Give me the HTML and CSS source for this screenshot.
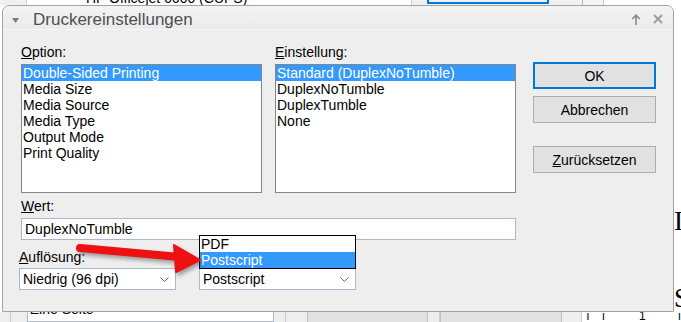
FILE: index.html
```html
<!DOCTYPE html>
<html lang="de">
<head>
    <meta charset="UTF-8">
    <title>Druckereinstellungen</title>
    <link rel="stylesheet" href="styles.css">
</head>
<body>
    <div class="backdrop">
        <div class="bg-top">
            <span class="bg-side"></span>
            <span class="bg-doc">HP Officejet 6600 (CUPS)</span>
            <span class="bg-panel"><span class="bg-focus"></span></span>
            <span class="bg-scroll"></span>
            <span class="bg-page"></span>
        </div>
        <div class="bg-mid">
            <div class="bg-serif"><span>I</span><span>S</span></div>
        </div>
        <div class="bg-bottom">
            <span class="bg-cell w10"></span>
            <span class="bg-cell w17"></span>
            <span class="bg-input">Eine Seite</span>
            <span class="bg-cell w12"></span>
            <span class="bg-cell w21"></span>
            <span class="bg-tab w122"></span>
            <span class="bg-cell w12"></span>
            <span class="bg-tab w124"></span>
            <span class="bg-cell w20"></span>
            <span class="bg-ruler"><i>ı</i><i>ı</i><b>1</b><i>ı</i></span>
        </div>
    </div>

    <div class="dialog">
        <div class="titlebar">
            <svg class="tri" width="7" height="5" viewBox="0 0 7 5"><polygon points="0,0 7,0 3.5,5" fill="#7a7a7a"/></svg>
            <span class="title">Druckereinstellungen</span>
            <span class="controls">
                <svg width="10" height="11" viewBox="0 0 10 11"><path d="M5 11V1.5M1.2 5L5 1.2 8.8 5" stroke="#8a8a8a" stroke-width="1.6" fill="none"/></svg>
                <svg width="10" height="10" viewBox="0 0 10 10"><path d="M1 1L9 9M9 1L1 9" stroke="#9a9a9a" stroke-width="1.8"/></svg>
            </span>
        </div>

        <div class="content">
            <div class="fields">
                <div class="lists">
                    <div class="field">
                        <label><u>O</u>ption:</label>
                        <ul class="listbox">
                            <li class="sel">Double-Sided Printing</li>
                            <li>Media Size</li>
                            <li>Media Source</li>
                            <li>Media Type</li>
                            <li>Output Mode</li>
                            <li>Print Quality</li>
                        </ul>
                    </div>
                    <div class="field">
                        <label><u>E</u>instellung:</label>
                        <ul class="listbox">
                            <li class="sel">Standard (DuplexNoTumble)</li>
                            <li>DuplexNoTumble</li>
                            <li>DuplexTumble</li>
                            <li>None</li>
                        </ul>
                    </div>
                </div>

                <label class="wert-label"><u>W</u>ert:</label>
                <div class="textbox">DuplexNoTumble</div>

                <div class="selects">
                    <div class="field">
                        <label class="small-gap"><u>A</u>uflösung:</label>
                        <div class="combo">
                            <span>Niedrig (96 dpi)</span>
                            <svg class="chev" width="9" height="5" viewBox="0 0 9 5"><path d="M0.5 0.5L4.5 4.5 8.5 0.5" stroke="#666" fill="none"/></svg>
                        </div>
                    </div>
                    <div class="field">
                        <label class="small-gap">&nbsp;</label>
                        <div class="combo">
                            <span>Postscript</span>
                            <svg class="chev" width="9" height="5" viewBox="0 0 9 5"><path d="M0.5 0.5L4.5 4.5 8.5 0.5" stroke="#666" fill="none"/></svg>
                            <ul class="popup">
                                <li>PDF</li>
                                <li class="sel">Postscript</li>
                            </ul>
                        </div>
                    </div>
                </div>
            </div>

            <div class="buttons">
                <button class="btn default">OK</button>
                <button class="btn">Abbrechen</button>
                <button class="btn reset"><u>Z</u>urücksetzen</button>
            </div>
        </div>
    </div>

    <svg class="annotation" width="681" height="322" viewBox="0 0 681 322">
        <line x1="80" y1="248" x2="180" y2="257" stroke="#ee1111" stroke-width="8" stroke-linecap="round"/>
        <polygon points="200,260 174,245 176,272" fill="#ee1111" stroke="#ee1111" stroke-width="2" stroke-linejoin="round"/>
    </svg>
</body>
</html>
```

FILE: styles.css
```css
html, body {
    margin: 0;
    padding: 0;
}

body {
    width: 681px;
    height: 322px;
    overflow: hidden;
    position: relative;
    background: #fff;
    font-family: "Liberation Sans", Arial, sans-serif;
    font-size: 14px;
    color: #000;
}

/* --- window behind the dialog --- */
.backdrop {
    display: grid;
    grid-template-rows: 5px 1fr 10px;
    height: 322px;
}

.bg-top {
    display: flex;
    overflow: hidden;
}

.bg-side {
    width: 26px;
    background: #f0f0f0;
    border-right: 1px solid #c5cfdc;
}

.bg-doc {
    width: 325px;
    padding-left: 59px;
    margin-top: -10px;
    line-height: 16px;
    white-space: nowrap;
    border-right: 1px solid #c5cfdc;
}

.bg-panel {
    width: 155px;
    background: #f0f0f0;
    padding-left: 15px;
    border-right: 1px solid #b8b8b8;
}

.bg-focus {
    display: block;
    width: 118px;
    height: 2px;
    border: 2px solid #0078d7;
    border-top: none;
}

.bg-scroll {
    width: 20px;
    background: #f3f3f3;
    border-right: 1px solid #c8c8c8;
}

.bg-page {
    flex: 1;
}

.bg-mid {
    display: flex;
    justify-content: flex-end;
}

.bg-serif {
    width: 7px;
    padding-top: 203px;
    display: flex;
    flex-direction: column;
    gap: 50px;
    font-family: "Liberation Serif", "Times New Roman", serif;
    font-size: 27px;
    line-height: 27px;
    overflow: hidden;
}

.bg-bottom {
    display: flex;
    background: #eee;
    overflow: hidden;
}

.bg-cell {
    border-right: 1px solid #cdcdcd;
}

.bg-cell.w17 { width: 16px; border-right: none; }
.w10 { width: 10px; }
.w12 { width: 11px; }
.w20 { width: 19px; }
.w21 { width: 21px; border-right: none; }

.bg-input {
    width: 246px;
    background: #fff;
    border: 1px solid #abb8cf;
    border-top: none;
    padding-left: 2px;
    margin-top: -10px;
    line-height: 14px;
    white-space: nowrap;
    overflow: hidden;
}

.bg-tab {
    background: #e1e1e1;
    border-left: 1px solid #c0c0c0;
    border-right: 1px solid #c0c0c0;
}

.w122 { width: 120px; }
.w124 { width: 122px; }

.bg-ruler {
    flex: 1;
    background: #fff;
    display: flex;
    gap: 12px;
    padding-left: 4px;
    font-size: 12px;
    line-height: 12px;
    margin-top: -2px;
}

.bg-ruler i { font-style: normal; }
.bg-ruler b { font-weight: normal; margin-left: 22px; margin-right: 20px; }

/* --- dialog --- */
.dialog {
    position: absolute;
    left: 2px;
    top: 5px;
    width: 672px;
    height: 307px;
    box-sizing: border-box;
    border: 1px solid #a3a3a3;
    border-radius: 7px 7px 0 0;
    background: #eeeeee;
}

.titlebar {
    height: 24px;
    box-sizing: border-box;
    padding-top: 3px;
    display: flex;
    align-items: flex-start;
    background: linear-gradient(#f3f3f3, #ebebeb);
    border-radius: 6px 6px 0 0;
    border-bottom: 1px solid #f6f6f6;
}

.tri {
    margin: 9px 0 0 9px;
}

.title {
    margin-left: 14px;
    font-size: 17px;
    line-height: 21px;
    color: #4f4f4f;
}

.controls {
    margin-left: auto;
    margin-right: 10px;
    margin-top: 5px;
    display: flex;
    gap: 12px;
}

.content {
    display: flex;
    gap: 17px;
    padding: 13px 17px 0 18px;
}

.fields {
    width: 495px;
    display: flex;
    flex-direction: column;
}

.lists {
    display: grid;
    grid-template-columns: 241px 241px;
    gap: 13px;
}

.field {
    display: flex;
    flex-direction: column;
}

label {
    line-height: 18px;
    margin-bottom: 3px;
}

label.small-gap {
    margin-bottom: 2px;
}

.listbox {
    list-style: none;
    margin: 0;
    padding: 0;
    height: 129px;
    box-sizing: border-box;
    border: 1px solid #868686;
    background: #fff;
}

.listbox li,
.popup li {
    height: 16px;
    line-height: 16px;
    padding-left: 1px;
    white-space: nowrap;
}

li.sel {
    background: #3399ff;
    color: #fff;
}

.wert-label {
    margin-top: 4px;
}

.textbox {
    height: 22px;
    box-sizing: border-box;
    border: 1px solid #abb8cf;
    background: #fff;
    padding-left: 3px;
    line-height: 20px;
}

.selects {
    display: flex;
    gap: 23px;
    margin-top: 8px;
    margin-left: -2px;
}

.selects .field {
    width: 157px;
}

.combo {
    position: relative;
    height: 22px;
    box-sizing: border-box;
    border: 1px solid #abb8cf;
    background: #fff;
    padding-left: 3px;
    line-height: 20px;
}

.chev {
    position: absolute;
    right: 6px;
    top: 8px;
}

.popup {
    position: absolute;
    left: -1px;
    right: -1px;
    bottom: 100%;
    margin: 0;
    padding: 0;
    list-style: none;
    background: #fff;
    border: 1px solid #000;
}

.buttons {
    width: 123px;
    margin-top: 19px;
    display: flex;
    flex-direction: column;
}

.btn {
    height: 27px;
    box-sizing: border-box;
    border: 1px solid #adadad;
    background: #e1e1e1;
    font-family: inherit;
    font-size: 14px;
    color: #000;
    padding: 0;
    margin-bottom: 7px;
}

.btn.default {
    border: 2px solid #0078d7;
}

.btn.reset {
    margin-top: 16px;
}

.annotation {
    position: absolute;
    left: 0;
    top: 0;
    pointer-events: none;
    filter: drop-shadow(2px 3px 2px rgba(0, 0, 0, 0.35));
}
```
